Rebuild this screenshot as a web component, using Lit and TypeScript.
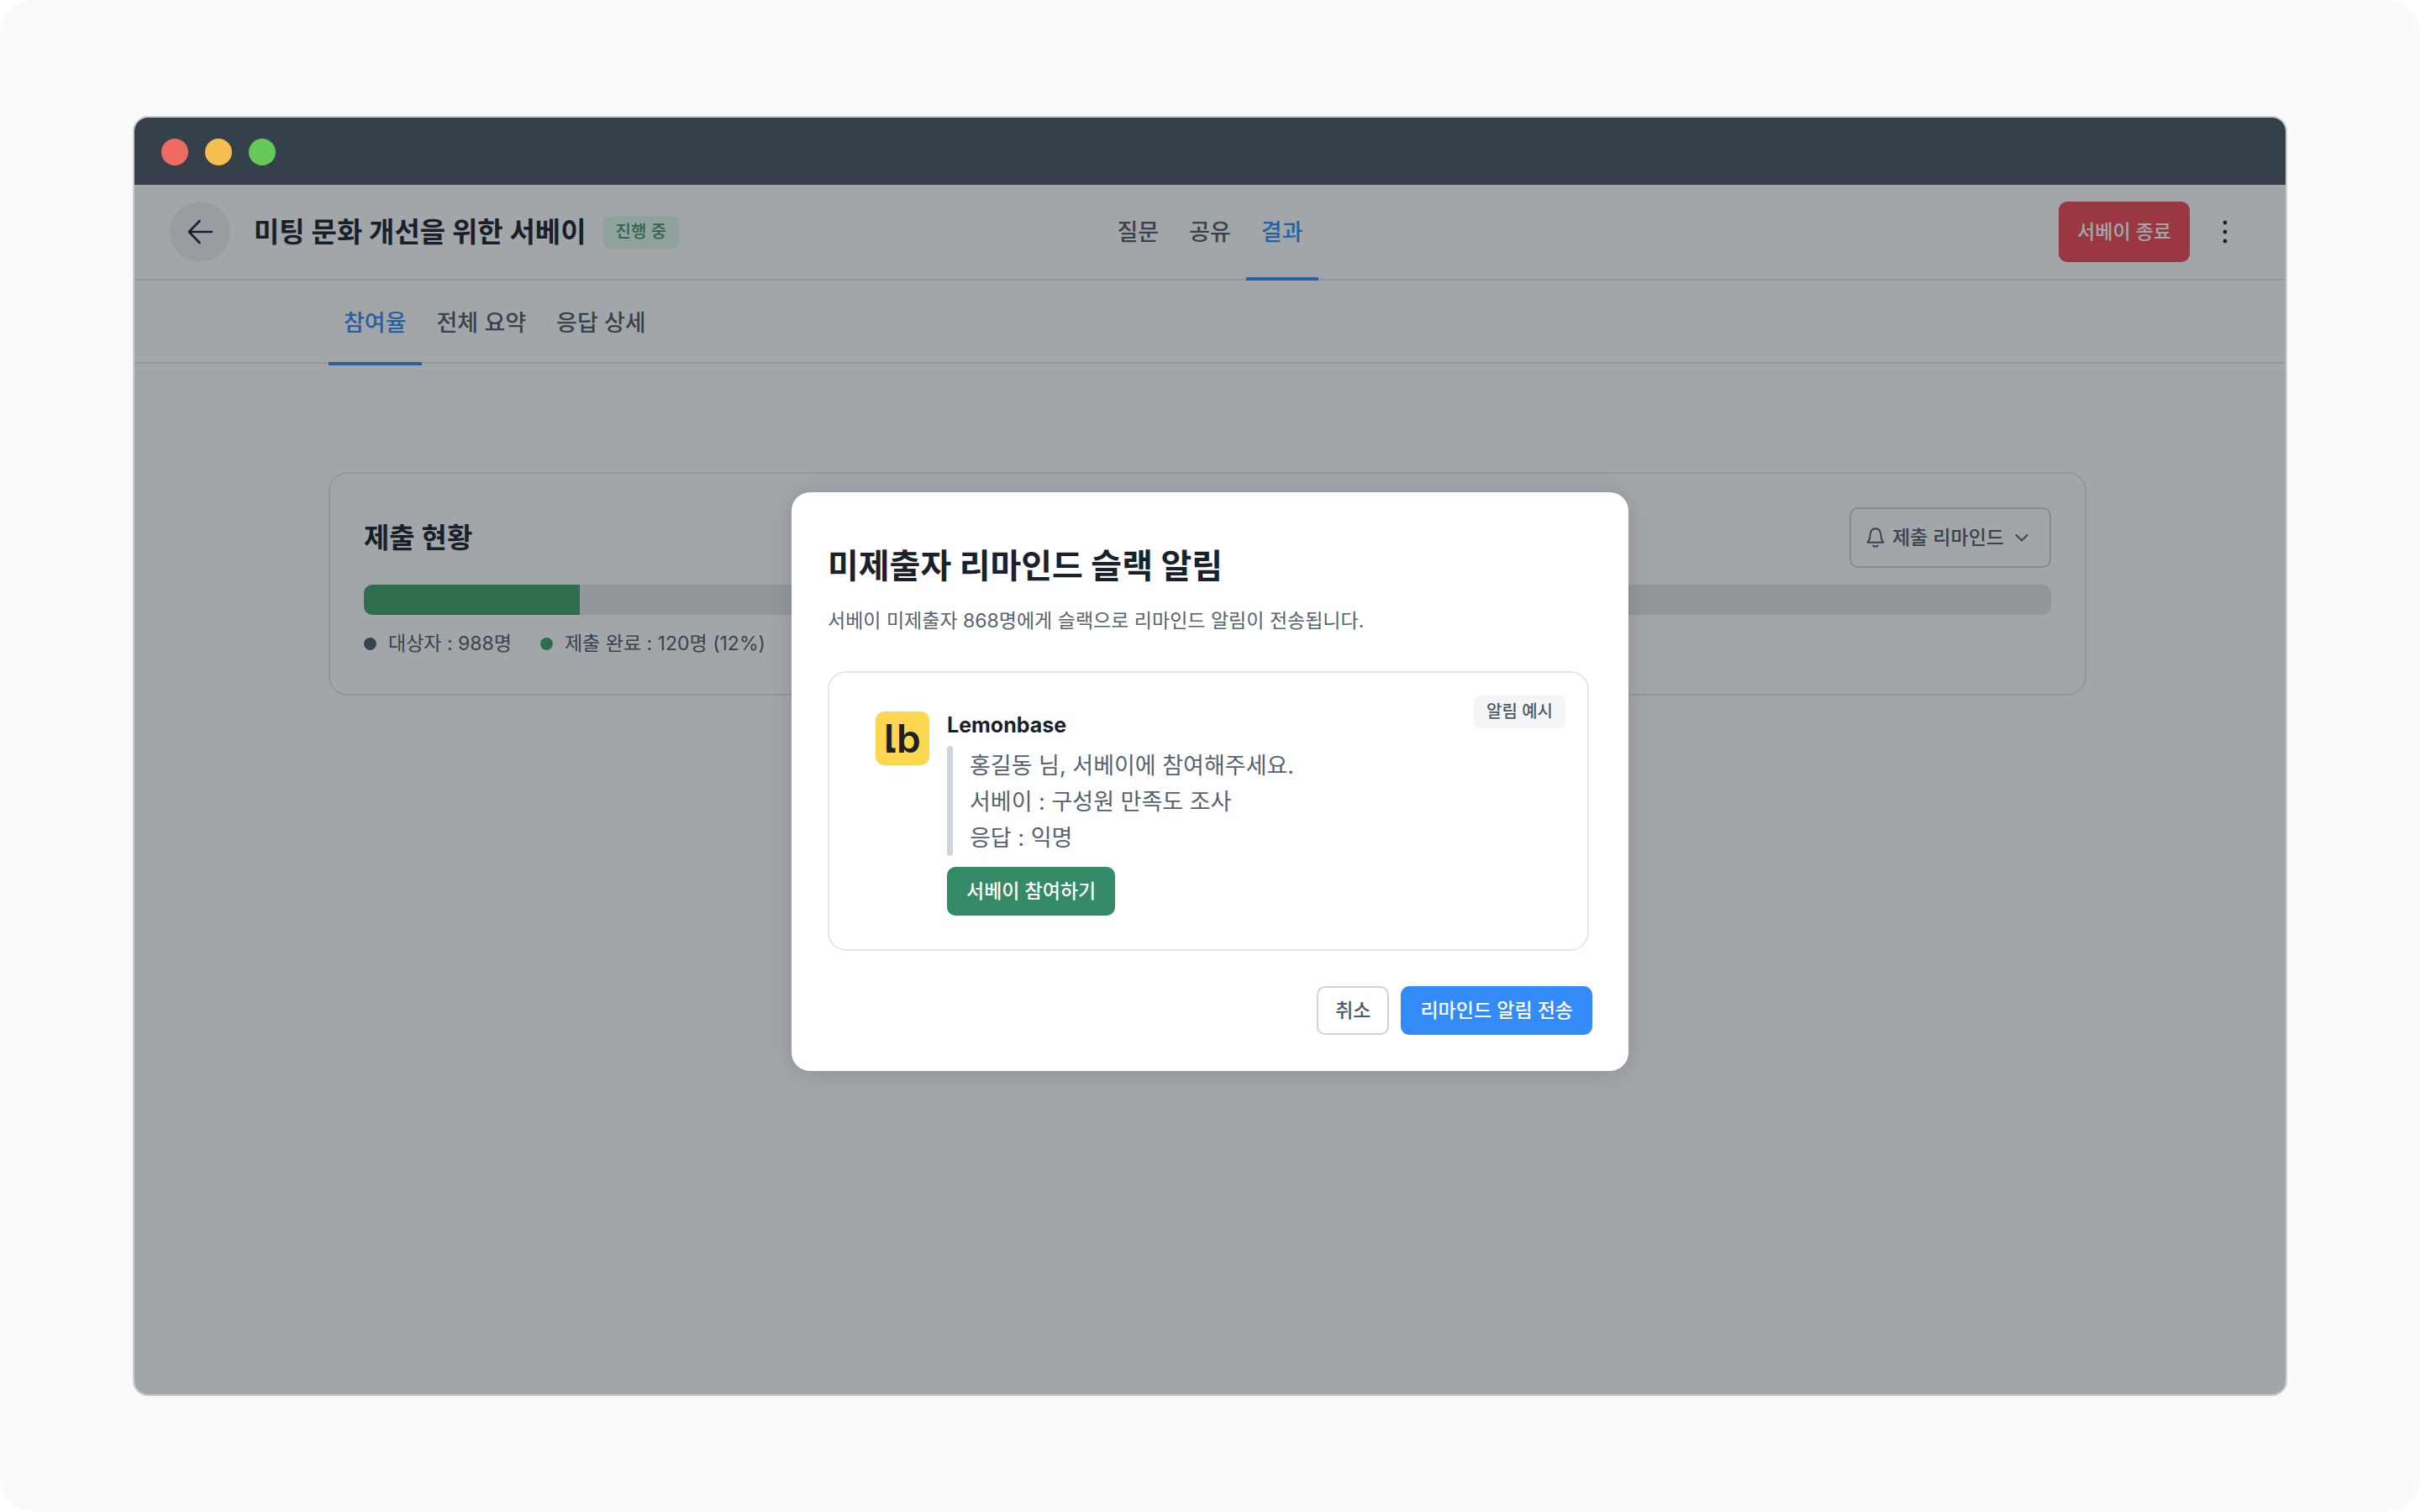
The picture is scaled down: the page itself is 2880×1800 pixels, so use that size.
import { LitElement, html, css, svg } from "lit";
import { customElement, property } from "lit/decorators.js";
import { classMap } from "lit/directives/class-map.js";

const tokens = css`
  *,
  *::before,
  *::after {
    box-sizing: border-box;
  }
  h1,
  h2,
  p,
  ul {
    margin: 0;
    padding: 0;
  }
  ul {
    list-style: none;
  }
  button {
    display: inline-flex;
    align-items: center;
    justify-content: center;
    margin: 0;
    border: 0;
    border-radius: 10px;
    font-family: inherit;
    font-size: 23px;
    font-weight: 500;
    line-height: 34px;
    white-space: nowrap;
    cursor: pointer;
  }
  a {
    color: inherit;
    text-decoration: none;
  }
  svg {
    display: block;
    fill: none;
  }
  .badge {
    padding: 0 15px;
    border-radius: 8px;
    font-size: 20px;
    font-weight: 500;
    line-height: 39px;
    white-space: nowrap;
  }
`;

interface Tab {
  label: string;
  active?: boolean;
}

@customElement("tab-list")
export class TabList extends LitElement {
  @property({ attribute: false }) tabs: Tab[] = [];
  @property() label = "";

  static styles = [
    tokens,
    css`
      :host {
        display: flex;
      }
      .list {
        display: flex;
      }
      .tab {
        display: flex;
        align-items: center;
        padding: 0 18px;
        font-size: 27px;
        font-weight: 500;
        line-height: 38px;
        color: #4e5a68;
        border-bottom: 4px solid transparent;
        border-top: 4px solid transparent;
        white-space: nowrap;
      }
      .active {
        color: #338bf8;
        border-bottom-color: #338bf8;
      }
    `,
  ];

  render() {
    return html`<nav class="list" aria-label=${this.label}>
      ${this.tabs.map(
        (t) => html`<a href="#" class=${classMap({ tab: true, active: !!t.active })}>${t.label}</a>`,
      )}
    </nav>`;
  }
}

@customElement("submission-card")
export class SubmissionCard extends LitElement {
  @property({ type: Number }) filled = 12.8;

  static styles = [
    tokens,
    css`
      :host {
        display: block;
        padding: 40px 40px 43px;
        border: 2px solid #e3e7eb;
        border-radius: 22px;
      }
      .head {
        display: flex;
        align-items: center;
        justify-content: space-between;
      }
      .title {
        font-size: 33px;
        font-weight: 700;
        line-height: 50px;
        color: #1b212a;
      }
      .remind {
        height: 72px;
        padding: 0 25px 0 18px;
        gap: 9px;
        border: 2px solid #cfd3da;
        background: transparent;
        color: #4e5a68;
      }
      .chevron {
        margin-left: 4px;
      }
      .track {
        display: flex;
        height: 36px;
        margin: 20px 0 17px;
        border-radius: 10px;
        overflow: hidden;
        background: #e4e7ea;
      }
      .fill {
        background: #41a067;
      }
      .legend {
        display: flex;
        gap: 34px;
        font-size: 23px;
        line-height: 34px;
        color: #4e5a68;
        white-space: nowrap;
      }
      .item {
        display: flex;
        align-items: center;
        gap: 14px;
      }
      .item::before {
        content: "";
        width: 15px;
        height: 15px;
        border-radius: 50%;
        background: #4e5a68;
      }
      .done::before {
        background: #41a067;
      }
      .rest::before {
        background: #e4e7ea;
      }
    `,
  ];

  render() {
    return html`
      <div class="head">
        <h2 class="title">제출 현황</h2>
        <button class="remind" type="button" aria-haspopup="menu">
          <svg width="22" height="24" viewBox="0 0 22 24" stroke="currentColor" stroke-width="1.9" stroke-linecap="round" stroke-linejoin="round">
            <path d="M1.4 17.8c2-1.9 2.8-3.9 3.1-8.2C4.8 4.6 7 1.3 11 1.3s6.2 3.3 6.5 8.3c.3 4.3 1.1 6.3 3.1 8.2z" />
            <path d="M8 21.4c.8 1 1.8 1.4 3 1.4s2.2-.4 3-1.4" />
          </svg>
          제출 리마인드
          <svg class="chevron" width="16" height="16" viewBox="0 0 16 16" stroke="currentColor" stroke-width="2" stroke-linecap="round" stroke-linejoin="round">
            <path d="M1.5 5 8 11.5 14.5 5" />
          </svg>
        </button>
      </div>
      <div class="track"><div class="fill" style="width:${this.filled}%"></div></div>
      <ul class="legend">
        <li class="item">대상자 : 988명</li>
        <li class="item done">제출 완료 : 120명 (12%)</li>
        <li class="item rest"></li>
      </ul>
    `;
  }
}

@customElement("remind-dialog")
export class RemindDialog extends LitElement {
  static styles = [
    tokens,
    css`
      :host {
        display: block;
        width: 996px;
        max-width: 100%;
        padding: 58px 43px 43px;
        border-radius: 22px;
        background: #fff;
        box-shadow: 0 2px 28px rgba(20, 24, 30, 0.14);
        color: #4e5a68;
      }
      .title {
        font-size: 40px;
        font-weight: 700;
        line-height: 60px;
        color: #1b212a;
      }
      .desc {
        margin: 18px 0 43px;
        font-size: 23px;
        line-height: 34px;
        color: #566270;
      }
      .preview {
        position: relative;
        display: flex;
        align-items: flex-start;
        gap: 21px;
        margin-right: 4px;
        padding: 45px 55px 40px;
        border: 2px solid #e3e7eb;
        border-radius: 22px;
      }
      .example {
        position: absolute;
        top: 27px;
        right: 26px;
        background: #f3f5f7;
      }
      .logo {
        flex: none;
        margin-top: 1px;
        border-radius: 10px;
        background: #fed650;
        color: #1b212a;
        font-family: Inter, sans-serif;
        font-size: 46px;
        font-weight: 600;
      }
      .sender {
        font-size: 25px;
        font-weight: 700;
        line-height: 34px;
        color: #1b212a;
      }
      .quote {
        position: relative;
        margin: 8px 0 13px;
        padding: 2px 0 0 27px;
        font-size: 27px;
        line-height: 43px;
        color: #566270;
      }
      .quote::before {
        content: "";
        position: absolute;
        inset: 0 auto 0 0;
        width: 7px;
        border-radius: 4px;
        background: #cfd3da;
      }
      .join,
      .cancel,
      .send {
        height: 58px;
        padding: 0 23px;
      }
      .join {
        background: #348a66;
        color: #fff;
      }
      .actions {
        display: flex;
        justify-content: flex-end;
        gap: 14px;
        margin-top: 42px;
      }
      .cancel {
        padding: 0 20px;
        border: 2px solid #cfd3da;
        background: #fff;
        color: #4e5a68;
      }
      .send {
        background: #338bf8;
        color: #fff;
      }
    `,
  ];

  render() {
    return html`
      <section role="dialog" aria-modal="true" aria-labelledby="title">
        <h2 class="title" id="title">미제출자 리마인드 슬랙 알림</h2>
        <p class="desc">서베이 미제출자 868명에게 슬랙으로 리마인드 알림이 전송됩니다.</p>
        <div class="preview">
          <span class="badge example">알림 예시</span>
          <svg class="logo" width="64" height="64" viewBox="0 0 64 64" fill="none">
            <text x="10" y="49" fill="currentColor">l</text>
            <path d="M16 41.5q0 4.8 4.6 4.8h3" stroke="currentColor" stroke-width="5.4" />
            <path d="M10 42.5q.6 6.500 6.500 7.500H10z" fill="#fed650" />
            <text x="25" y="49" fill="currentColor">b</text>
          </svg>
          <div>
            <p class="sender">Lemonbase</p>
            <div class="quote">
              <p>홍길동 님, 서베이에 참여해주세요.</p>
              <p>서베이 : 구성원 만족도 조사</p>
              <p>응답 : 익명</p>
            </div>
            <button class="join" type="button">서베이 참여하기</button>
          </div>
        </div>
        <div class="actions">
          <button class="cancel" type="button">취소</button>
          <button class="send" type="button">리마인드 알림 전송</button>
        </div>
      </section>
    `;
  }
}

@customElement("app-root")
export class AppRoot extends LitElement {
  static styles = [
    tokens,
    css`
      :host {
        display: block;
        background: #fff;
        font-family: Inter, "Noto Sans CJK KR", sans-serif;
      }
      .page {
        display: flex;
        min-height: 100vh;
        padding: 138px 158px;
        border-radius: 40px;
        background: #fafafa;
      }
      .window {
        flex: 1;
        display: flex;
        flex-direction: column;
        border: 2px solid #cbd0d5;
        border-radius: 18px;
        overflow: hidden;
        background: #fff;
      }
      .titlebar {
        display: flex;
        align-items: center;
        gap: 20px;
        height: 80px;
        padding: 2px 32px 0;
        background: #36404a;
      }
      .light {
        width: 32px;
        height: 32px;
        border-radius: 50%;
      }
      .red {
        background: #ed6b60;
      }
      .yellow {
        background: #f5bf50;
      }
      .green {
        background: #64c956;
      }
      .screen {
        position: relative;
        flex: 1;
        display: flex;
        flex-direction: column;
      }
      .header {
        display: grid;
        grid-template-columns: 1fr auto 1fr;
        height: 114px;
        padding: 0 42px;
        box-shadow: inset 0 -2px #e3e7eb;
      }
      .left,
      .right {
        display: flex;
        align-items: center;
        padding-bottom: 2px;
      }
      .right {
        justify-content: flex-end;
        gap: 12px;
      }
      .back {
        width: 72px;
        height: 72px;
        border-radius: 50%;
        background: #f0f1f3;
        color: #1b212a;
      }
      .name {
        margin: 0 20px 0 28px;
        font-size: 33px;
        font-weight: 700;
        line-height: 50px;
        color: #1b212a;
        white-space: nowrap;
      }
      .status {
        background: #dffaea;
        color: #41915f;
      }
      .finish {
        height: 72px;
        padding: 0 22px;
        background: #f34655;
        color: #fff;
      }
      .more {
        width: 60px;
        height: 60px;
        background: transparent;
        color: #1b212a;
      }
      .subheader {
        display: flex;
        height: 101px;
        padding: 0 231px;
        background: linear-gradient(#e3e7eb, #e3e7eb) 0 97px / 100% 2px no-repeat;
      }
      .content {
        padding: 127px 237px 0 231px;
      }
      .overlay {
        position: absolute;
        inset: 0;
        display: flex;
        align-items: center;
        justify-content: center;
        padding-bottom: 20px;
        background: rgba(22, 32, 40, 0.4);
      }
    `,
  ];

  private mainTabs: Tab[] = [{ label: "질문" }, { label: "공유" }, { label: "결과", active: true }];
  private resultTabs: Tab[] = [
    { label: "참여율", active: true },
    { label: "전체 요약" },
    { label: "응답 상세" },
  ];

  render() {
    return html`
      <div class="page">
        <div class="window">
          <div class="titlebar">
            <span class="light red"></span>
            <span class="light yellow"></span>
            <span class="light green"></span>
          </div>
          <div class="screen">
            <header class="header">
              <div class="left">
                <button class="back" type="button" aria-label="뒤로">
                  <svg width="32" height="32" viewBox="0 0 32 32" stroke="currentColor" stroke-width="2.6" stroke-linecap="round" stroke-linejoin="round">
                    <path d="M30 16H3M15.5 3 3 16l12.5 13" />
                  </svg>
                </button>
                <h1 class="name">미팅 문화 개선을 위한 서베이</h1>
                <span class="badge status">진행 중</span>
              </div>
              <tab-list label="서베이" .tabs=${this.mainTabs}></tab-list>
              <div class="right">
                <button class="finish" type="button">서베이 종료</button>
                <button class="more" type="button" aria-label="더보기">
                  <svg width="6" height="28" viewBox="0 0 6 28">
                    ${[3, 14, 25].map((y) => svg`<circle cx="3" cy=${y} r="2.4" fill="currentColor" />`)}
                  </svg>
                </button>
              </div>
            </header>
            <div class="subheader">
              <tab-list label="결과" .tabs=${this.resultTabs}></tab-list>
            </div>
            <main class="content">
              <submission-card></submission-card>
            </main>
            <div class="overlay"><remind-dialog></remind-dialog></div>
          </div>
        </div>
      </div>
    `;
  }
}
